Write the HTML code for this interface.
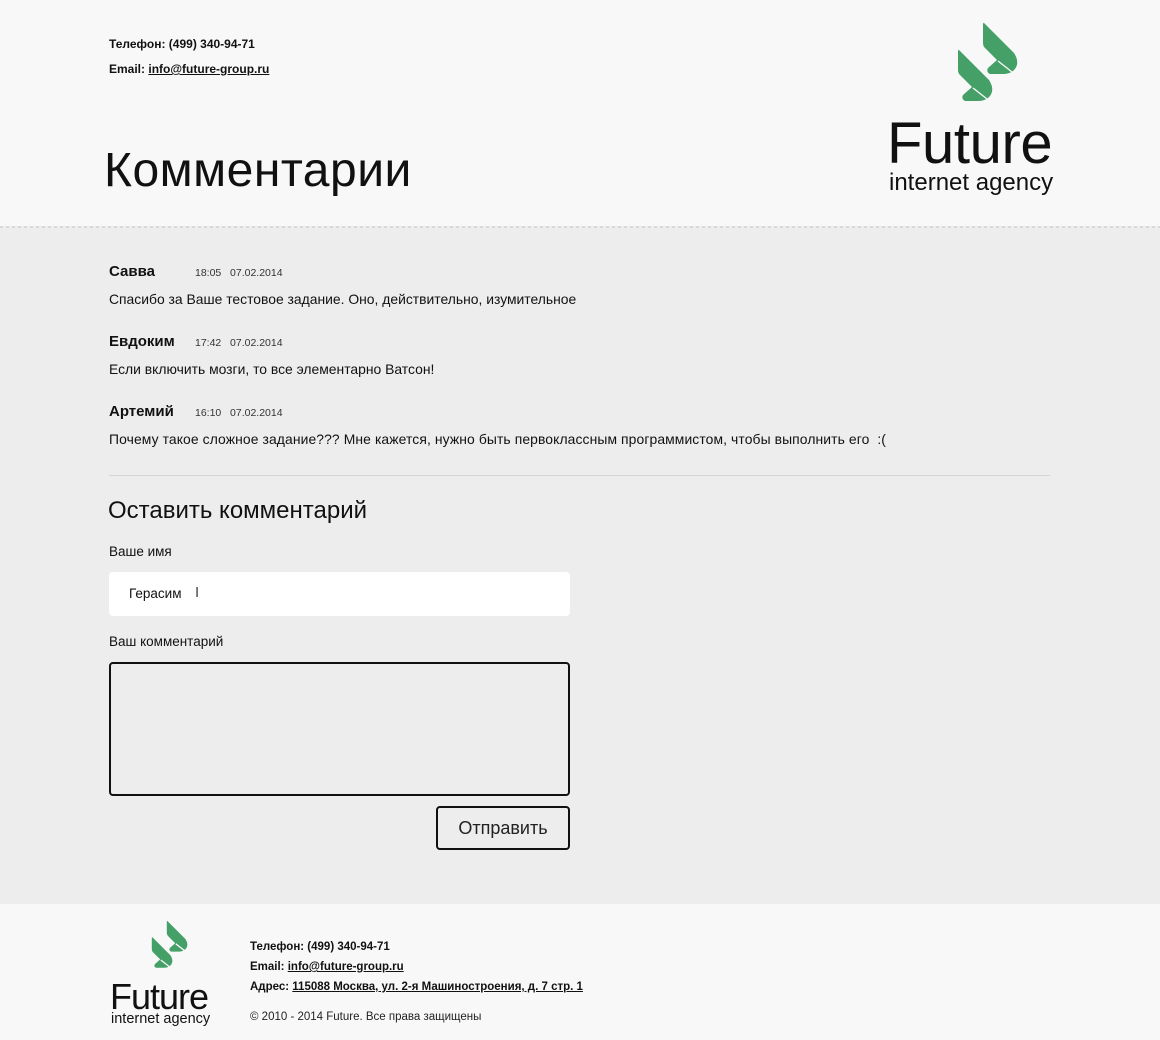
<!DOCTYPE html>
<html><head><meta charset="utf-8">
<style>
*{margin:0;padding:0;box-sizing:border-box}
body{width:1160px;height:1040px;background:#ededed;font-family:"Liberation Sans","Noto Sans CJK SC",sans-serif;color:#111;position:relative;overflow:hidden}
.abs{position:absolute;white-space:nowrap}
header{position:absolute;left:0;top:0;width:1160px;height:226px;background:#f8f8f8}
.zigline{position:absolute;left:0;top:226px;width:1160px;height:2px;background:repeating-linear-gradient(90deg,#d8d8d8 0 3px,#ededed 3px 6px)}
.small{font-size:12px;font-weight:bold}
.fs{font-size:11.5px;font-weight:bold}
u{text-decoration:underline}
footer{position:absolute;left:0;top:904px;width:1160px;height:136px;background:#f8f8f8}
.name{font-size:15px;font-weight:bold}
.time{font-size:10.5px;color:#333}
.txt{font-size:13.9px;color:#111}
.lbl{font-size:13.5px;color:#111}
</style></head><body>
<header>
<div class="abs small" style="left:109px;top:37px">Телефон: (499) 340-94-71</div>
<div class="abs small" style="left:109px;top:62px">Email: <u>info@future-group.ru</u></div>
<div class="abs" style="left:104px;top:143px;font-size:48px;font-weight:300;color:#111;letter-spacing:0.5px">Комментарии</div>
<svg class="abs" style="left:950px;top:18px" width="80" height="90" viewBox="0 0 80 90">
<path d="M34,5 L64,35 Q71,46 63,53 Q59,56 53,56 L40,56 Q36,54 38,50 L47,42 L35,30 Q33,28 33,25 L33,8 Q33,4 34,5Z" fill="#44a066"/>
<path d="M9,32 L39,62 Q46,73 38,80 Q34,83 28,83 L15,83 Q11,81 13,77 L22,69 L10,57 Q8,55 8,52 L8,35 Q8,31 9,32Z" fill="#44a066"/>
<path d="M48,43 L62,54" stroke="#f8f8f8" stroke-width="1.4"/>
<path d="M23,70 L37,81" stroke="#f8f8f8" stroke-width="1.4"/>
</svg>
<div class="abs" style="left:887px;top:110px;font-size:58px;color:#111;letter-spacing:-0.4px">Future</div>
<div class="abs" style="left:889px;top:169px;font-size:24px;color:#111;font-weight:300">internet agency</div>
</header>
<div class="zigline"></div>

<div class="abs name" style="left:109px;top:263px">Савва</div>
<div class="abs time" style="left:195px;top:267px">18:05 &nbsp;&nbsp;07.02.2014</div>
<div class="abs txt" style="left:109px;top:291px">Спасибо за Ваше тестовое задание. Оно, действительно, изумительное</div>
<div class="abs name" style="left:109px;top:333px">Евдоким</div>
<div class="abs time" style="left:195px;top:337px">17:42 &nbsp;&nbsp;07.02.2014</div>
<div class="abs txt" style="left:109px;top:361px">Если включить мозги, то все элементарно Ватсон!</div>
<div class="abs name" style="left:109px;top:403px">Артемий</div>
<div class="abs time" style="left:195px;top:407px">16:10 &nbsp;&nbsp;07.02.2014</div>
<div class="abs txt" style="left:109px;top:431px;letter-spacing:0.1px">Почему такое сложное задание??? Мне кажется, нужно быть первоклассным программистом, чтобы выполнить его &nbsp;:(</div>
<div class="abs" style="left:109px;top:475px;width:941px;height:1px;background:#d4d4d4"></div>
<div class="abs" style="left:108px;top:497px;font-size:24px;color:#111">Оставить комментарий</div>
<div class="abs lbl" style="left:109px;top:544px">Ваше имя</div>
<div class="abs" style="left:109px;top:572px;width:461px;height:44px;background:#fff;border-radius:4px"></div>
<div class="abs lbl" style="left:129px;top:586px">Герасим</div>
<div class="abs" style="left:195px;top:584px;font-size:15px;color:#444;font-weight:300">I</div>
<div class="abs lbl" style="left:109px;top:634px">Ваш комментарий</div>
<div class="abs" style="left:109px;top:662px;width:461px;height:134px;border:2px solid #111;border-radius:4px"></div>
<div class="abs" style="left:436px;top:806px;width:134px;height:44px;border:2px solid #111;border-radius:4px;font-size:18px;text-align:center;line-height:40px;color:#222">Отправить</div>

<footer>
<svg class="abs" style="left:147px;top:14px" width="48" height="54" viewBox="0 0 80 90">
<path d="M34,5 L64,35 Q71,46 63,53 Q59,56 53,56 L40,56 Q36,54 38,50 L47,42 L35,30 Q33,28 33,25 L33,8 Q33,4 34,5Z" fill="#44a066"/>
<path d="M9,32 L39,62 Q46,73 38,80 Q34,83 28,83 L15,83 Q11,81 13,77 L22,69 L10,57 Q8,55 8,52 L8,35 Q8,31 9,32Z" fill="#44a066"/>
<path d="M48,43 L62,54" stroke="#f8f8f8" stroke-width="2.2"/>
<path d="M23,70 L37,81" stroke="#f8f8f8" stroke-width="2.2"/>
</svg>
<div class="abs" style="left:110px;top:72px;font-size:36px;color:#111;letter-spacing:-1px">Future</div>
<div class="abs" style="left:111px;top:107px;font-size:14.5px;color:#111;font-weight:300">internet agency</div>
<div class="abs fs" style="left:250px;top:37px">Телефон: (499) 340-94-71</div>
<div class="abs fs" style="left:250px;top:57px">Email: <u>info@future-group.ru</u></div>
<div class="abs fs" style="left:250px;top:77px">Адрес: <u>115088 Москва, ул. 2-я Машиностроения, д. 7 стр. 1</u></div>
<div class="abs" style="left:250px;top:107px;font-size:11.5px;color:#222">© 2010 - 2014 Future. Все права защищены</div>
</footer>
</body></html>
